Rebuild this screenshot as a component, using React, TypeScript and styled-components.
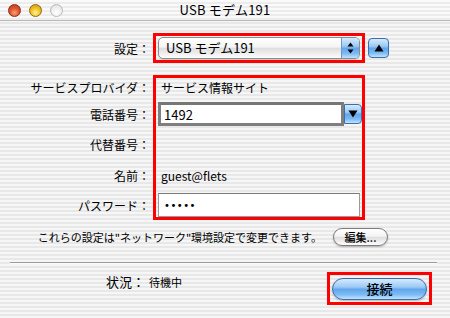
import React from 'react'
import styled, { createGlobalStyle } from 'styled-components'

const GlobalStyle = createGlobalStyle`
  html, body { margin: 0; padding: 0; }
  body {
    width: 450px;
    height: 318px;
    overflow: hidden;
    font-family: "Noto Sans CJK JP", "Liberation Sans", sans-serif;
    color: #000;
  }
`

const pinstripe = `repeating-linear-gradient(to bottom, #f6f6f6 0px, #f6f6f6 2px, #e8e8e8 2px, #e8e8e8 4px)`
const aquaBlue = `linear-gradient(to bottom, #d6eafc 0%, #9ccaf5 40%, #62a6ec 52%, #7cbbf3 78%, #c4e3fd 100%)`
const aquaWhite = `linear-gradient(to bottom, #ffffff 0%, #f4f4f4 45%, #dedede 52%, #f0f0f0 80%, #fdfdfd 100%)`

const Window = styled.div`
  width: 450px;
  height: 318px;
  display: flex;
  flex-direction: column;
  background: ${pinstripe};
`

const TitleBar = styled.div`
  height: 20px;
  border-bottom: 1px solid #b8b8b8;
  display: grid;
  grid-template-columns: 1fr auto 1fr;
  align-items: center;
  background: repeating-linear-gradient(to bottom, #fafafa 0px, #fafafa 2px, #ececec 2px, #ececec 4px);
`

const Lights = styled.div`
  display: flex;
  gap: 8px;
  padding-left: 8px;
`

const Light = styled.span<{ $color: 'red' | 'yellow' | 'gray' }>`
  width: 13px;
  height: 13px;
  border-radius: 50%;
  box-sizing: border-box;
  border: 1px solid ${p => (p.$color === 'red' ? '#8a2a1a' : p.$color === 'yellow' ? '#8c6a12' : '#b8b8b8')};
  background: ${p =>
    p.$color === 'red'
      ? 'radial-gradient(circle at 50% 70%, #f7a27a 0%, #e0582e 45%, #b8321a 100%)'
      : p.$color === 'yellow'
      ? 'radial-gradient(circle at 50% 70%, #fff39a 0%, #f3c426 45%, #c98f0e 100%)'
      : 'radial-gradient(circle at 50% 70%, #ffffff 0%, #f0f0f0 50%, #d8d8d8 100%)'};
`

const Title = styled.div`
  font-size: 13px;
  line-height: 20px;
  letter-spacing: 0.2px;
`

const Body = styled.div`
  padding-top: 12px;
  display: flex;
  flex-direction: column;
`

const SettingRow = styled.div`
  display: flex;
  align-items: center;
`

const Label = styled.div<{ $w?: number }>`
  width: ${p => p.$w ?? 150}px;
  text-align: right;
  font-size: 12px;
  white-space: nowrap;
`

const RedBox = styled.div<{ $w: number; $h?: number }>`
  box-sizing: border-box;
  width: ${p => p.$w}px;
  ${p => (p.$h ? `height: ${p.$h}px;` : '')}
  border: 3px solid #ff0000;
  margin-left: 3px;
  display: flex;
  flex-direction: column;
  justify-content: center;
  padding-left: 2px;
`

const Popup = styled.div`
  box-sizing: border-box;
  width: 202px;
  height: 22px;
  border: 1px solid #8c8c8c;
  border-radius: 5px;
  background: ${aquaWhite};
  display: flex;
  overflow: hidden;
  box-shadow: 0 1px 1px rgba(0, 0, 0, 0.15);
`

const PopupText = styled.div`
  flex: 1;
  font-size: 13px;
  line-height: 20px;
  padding-left: 7px;
`

const PopupArrows = styled.div`
  width: 17px;
  background: ${aquaBlue};
  border-left: 1px solid #6f96c4;
  display: flex;
  align-items: center;
  justify-content: center;
`

const BlueSquare = styled.div<{ $w: number; $h: number }>`
  box-sizing: border-box;
  width: ${p => p.$w}px;
  height: ${p => p.$h}px;
  border: 1px solid #3c6fae;
  border-radius: 4px;
  background: ${aquaBlue};
  display: flex;
  align-items: center;
  justify-content: center;
`

const UpButton = styled(BlueSquare)`
  margin-left: 3px;
`

const DetailSection = styled.div`
  display: flex;
  align-items: flex-start;
  margin-top: 12px;
`

const Stack = styled.div<{ $w?: number }>`
  display: flex;
  flex-direction: column;
  gap: 6px;
  ${p => (p.$w ? `width: ${p.$w}px; padding-top: 3px;` : '')}
`

const Row = styled.div<{ $h: number; $end?: boolean }>`
  height: ${p => p.$h}px;
  display: flex;
  align-items: center;
  justify-content: ${p => (p.$end ? 'flex-end' : 'flex-start')};
`

const Value = styled.div`
  font-size: 12px;
  padding-left: 3px;
  white-space: nowrap;
`

const TextField = styled.div<{ $w: number; $thick?: boolean }>`
  box-sizing: border-box;
  width: ${p => p.$w}px;
  height: 100%;
  background: #fff;
  border: ${p => (p.$thick ? '3px solid #7f7f7f' : '1px solid #9a9a9a')};
  border-top-color: ${p => (p.$thick ? '#767676' : '#7a7a7a')};
  display: flex;
  align-items: center;
  padding-left: ${p => (p.$thick ? 3 : 5)}px;
  font-size: 13px;
`

const Dots = styled.span`
  font-family: "DejaVu Sans", sans-serif;
  font-size: 10px;
  letter-spacing: 0.5px;
`

const Combo = styled.div`
  display: flex;
  align-items: center;
  height: 100%;
`

const ComboButton = styled(BlueSquare)`
  border-radius: 0 4px 4px 0;
`

const NoteRow = styled.div`
  display: flex;
  justify-content: flex-end;
  align-items: center;
  gap: 11px;
  padding-right: 62px;
  margin-top: 8px;
`

const Note = styled.div`
  font-size: 11px;
  white-space: nowrap;
`

const PillButton = styled.button<{ $blue?: boolean; $w: number; $h: number }>`
  box-sizing: border-box;
  width: ${p => p.$w}px;
  height: ${p => p.$h}px;
  border-radius: ${p => p.$h / 2}px;
  border: 1px solid ${p => (p.$blue ? '#3a6aa8' : '#7c7c7c')};
  background: ${p => (p.$blue ? aquaBlue : aquaWhite)};
  font-family: inherit;
  font-size: ${p => (p.$blue ? 13 : 11)}px;
  font-weight: 500;
  color: #000;
  padding: 0;
  line-height: 1;
  box-shadow: 0 1px 2px rgba(0, 0, 0, 0.25);
`

const Separator = styled.div`
  height: 0;
  border-top: 1px solid #9c9c9c;
  border-bottom: 1px solid #fbfbfb;
  margin: 16px 13px 0 10px;
`

const StatusRow = styled.div`
  display: flex;
  align-items: flex-start;
  margin-top: 8px;
`

const StatusLabel = styled.div`
  width: 145px;
  text-align: right;
  font-size: 13px;
  line-height: 20px;
`

const StatusValue = styled.div`
  font-size: 11px;
  line-height: 20px;
  padding-left: 4px;
  flex: 1;
`

const ConnectBox = styled(RedBox)`
  margin-right: 18px;
  align-items: center;
  padding-left: 0;
`

const UpDown = () => (
  <svg width="7" height="12" viewBox="0 0 7 12">
    <path d="M3.5 0.5 L6.5 4.5 L0.5 4.5 Z" fill="#000" />
    <path d="M3.5 11.5 L6.5 7.5 L0.5 7.5 Z" fill="#000" />
  </svg>
)

const Triangle = ({ up }: { up?: boolean }) => (
  <svg width="10" height="8" viewBox="0 0 10 8">
    <path d={up ? 'M5 0.5 L9.5 7.5 L0.5 7.5 Z' : 'M5 7.5 L9.5 0.5 L0.5 0.5 Z'} fill="#000" />
  </svg>
)

export default function App() {
  return (
    <Window>
      <GlobalStyle />
      <TitleBar>
        <Lights>
          <Light $color="red" />
          <Light $color="yellow" />
          <Light $color="gray" />
        </Lights>
        <Title>USB モデム191</Title>
        <div />
      </TitleBar>
      <Body>
        <SettingRow>
          <Label>設定：</Label>
          <RedBox $w={212} $h={30}>
            <Popup>
              <PopupText>USB モデム191</PopupText>
              <PopupArrows>
                <UpDown />
              </PopupArrows>
            </Popup>
          </RedBox>
          <UpButton $w={21} $h={20}>
            <Triangle up />
          </UpButton>
        </SettingRow>

        <DetailSection>
          <Stack $w={150}>
            <Row $h={18} $end><Label>サービスプロバイダ：</Label></Row>
            <Row $h={24} $end><Label>電話番号：</Label></Row>
            <Row $h={25} $end><Label>代替番号：</Label></Row>
            <Row $h={24} $end><Label>名前：</Label></Row>
            <Row $h={24} $end><Label>パスワード：</Label></Row>
          </Stack>
          <RedBox $w={212}>
            <Stack>
              <Row $h={18}><Value>サービス情報サイト</Value></Row>
              <Row $h={24}>
                <Combo>
                  <TextField $w={186} $thick>1492</TextField>
                  <ComboButton $w={18} $h={20}>
                    <Triangle />
                  </ComboButton>
                </Combo>
              </Row>
              <Row $h={25} />
              <Row $h={24}><Value>guest@flets</Value></Row>
              <Row $h={24}>
                <TextField $w={202}><Dots>•••••</Dots></TextField>
              </Row>
            </Stack>
          </RedBox>
        </DetailSection>

        <NoteRow>
          <Note>これらの設定は"ネットワーク"環境設定で変更できます。</Note>
          <PillButton $w={55} $h={18}>編集...</PillButton>
        </NoteRow>

        <Separator />

        <StatusRow>
          <StatusLabel>状況：</StatusLabel>
          <StatusValue>待機中</StatusValue>
          <ConnectBox $w={105} $h={33}>
            <PillButton $blue $w={95} $h={22}>接続</PillButton>
          </ConnectBox>
        </StatusRow>
      </Body>
    </Window>
  )
}
